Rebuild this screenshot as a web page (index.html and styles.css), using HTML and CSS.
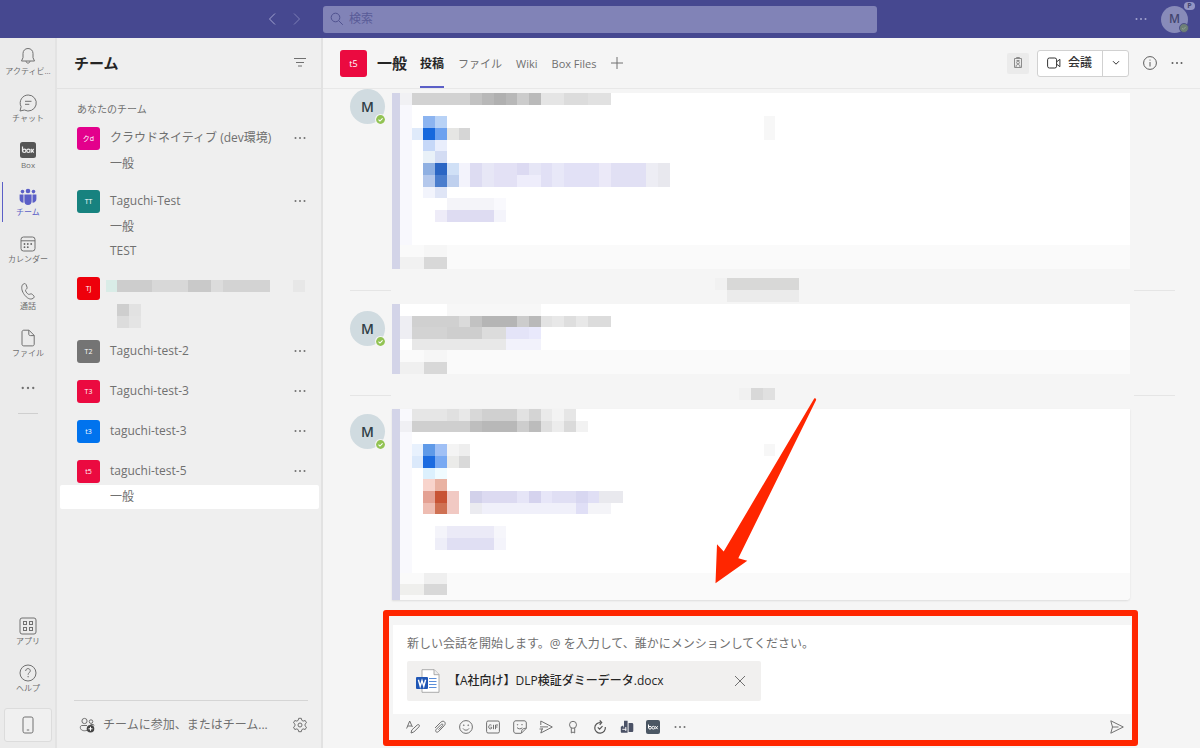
FILE: index.html
```html
<!DOCTYPE html>
<html lang="ja">
<head>
<meta charset="utf-8">
<title>チーム</title>
<link rel="stylesheet" href="styles.css">
</head>
<body>
<svg class="defs" aria-hidden="true">
  <symbol id="more" viewBox="0 0 12 12"><g fill="currentColor"><circle cx="1.5" cy="6" r="1"/><circle cx="6" cy="6" r="1"/><circle cx="10.5" cy="6" r="1"/></g></symbol>
  <symbol id="check" viewBox="0 0 10 10"><circle cx="5" cy="5" r="5" fill="#f5f5f5"/><circle cx="5" cy="5" r="4" fill="#92c353"/><path d="M3.2 5.1l1.3 1.3 2.4-2.5" fill="none" stroke="#fff" stroke-width="1"/></symbol>
</svg>
<div class="app">
  <header class="topbar">
    <div class="history">
      <button aria-label="戻る"><svg width="8" height="14" viewBox="0 0 8 14"><path d="M7 1.500L1.500 7L7 12.500"/></svg></button>
      <button class="dim" aria-label="進む"><svg width="8" height="14" viewBox="0 0 8 14"><path d="M1 1.500L6.500 7L1 12.500"/></svg></button>
    </div>
    <label class="search">
      <svg width="14" height="14" viewBox="0 0 14 14"><circle cx="5.500" cy="5.500" r="4.300"/><path d="M8.800 8.800l4 4"/></svg>
      <input type="search" placeholder="検索" aria-label="検索">
    </label>
    <div class="account">
      <button aria-label="設定など"><svg width="12" height="12"><use href="#more"/></svg></button>
      <button class="me" aria-label="アカウント">M<span class="me-badge">P</span><svg class="me-status" width="10" height="10" viewBox="0 0 10 10"><circle cx="5" cy="5" r="4.500" fill="#6d7f76" stroke="#4d4f88"/><path d="M3 5.200l1.300 1.200 2.500-2.600" fill="none" stroke="#91a196"/></svg></button>
    </div>
  </header>

  <nav class="rail">
    <a href="#"><svg width="18" height="18" viewBox="0 0 18 18"><path d="M9 1.500c-3 0-5 2.200-5 5v4.200L2.500 14h13L14 10.700V6.500c0-2.800-2-5-5-5zM7 14.200c.2 1.200 1 1.900 2 1.900s1.800-.7 2-1.900"/></svg><span>アクティビ...</span></a>
    <a href="#"><svg width="18" height="18" viewBox="0 0 18 18"><path d="M9.200 1a8 8 0 1 1-3.800 15L1 17l1.100-4.300A8 8 0 0 1 9.200 1zM6 7.300h6.500M6 10.300h4.300"/></svg><span>チャット</span></a>
    <a href="#"><svg width="18" height="18" viewBox="0 0 18 18"><rect x="1" y="1" width="16" height="16" rx="2.500" fill="#555" stroke="none"/><g stroke="#eee" stroke-width="1.200"><path d="M3.500 5.500v5"/><circle cx="5.300" cy="9.800" r="1.700"/><circle cx="9.400" cy="9.800" r="1.700"/><path d="M11.800 8l2.900 3.600M14.700 8l-2.900 3.600"/></g></svg><span>Box</span></a>
    <a href="#" class="on"><svg width="18" height="18" viewBox="0 0 18 18"><g fill="#5b5fc7" stroke="none"><circle cx="9" cy="3" r="2.300"/><circle cx="3.500" cy="3.600" r="1.800"/><circle cx="14.500" cy="3.600" r="1.800"/><path d="M5.400 6.500h7.200v6.800a3.600 3.600 0 0 1-7.200 0zM.6 6.500h3.900v8.200C2 14.700.6 13 .6 11zM17.400 6.500h-3.900v8.200c2.500 0 3.900-1.700 3.900-3.700z"/></g></svg><span>チーム</span></a>
    <a href="#"><svg width="18" height="18" viewBox="0 0 18 18"><rect x="2" y="2" width="14" height="14" rx="2.500"/><path d="M2 5.800h14"/><g fill="#666" stroke="none"><circle cx="8.800" cy="9" r=".9"/><circle cx="12.200" cy="9" r=".9"/><circle cx="5.500" cy="12.200" r=".9"/><circle cx="8.800" cy="12.200" r=".9"/><circle cx="5.500" cy="9" r=".9"/></g></svg><span>カレンダー</span></a>
    <a href="#"><svg width="18" height="18" viewBox="0 0 18 18"><path d="M3.300 3.200C4.500 1.300 6.300 1 7 2.500l1 2.600c.3 1-.1 1.700-1.300 2.700-.5.500.2 2 1.100 3.100 1 1.200 1.900 1.700 2.600 1.400 1.200-.5 2.200-.7 3 .1l1.400 1.500c.8.900.3 1.800-.8 2.500-3 1.800-6.300-.6-8.600-3.700C3 9.600 2 5.700 3.300 3.200z"/></svg><span>通話</span></a>
    <a href="#"><svg width="18" height="18" viewBox="0 0 18 18"><path d="M3 3c0-1.100.7-1.800 1.800-1.800H10l5.200 5.200v8.800c0 1.100-.7 1.700-1.800 1.700H4.800C3.700 16.900 3 16.300 3 15.200zM9.800 1.300v3.800c0 1 .5 1.500 1.500 1.500h3.800"/></svg><span>ファイル</span></a>
    <button class="rail-more" aria-label="その他"><svg width="14" height="14"><use href="#more"/></svg></button>
    <hr>
    <div class="rail-end">
      <a href="#"><svg width="18" height="18" viewBox="0 0 18 18"><rect x="1" y="1" width="16" height="16" rx="2"/><rect x="4.500" y="4.500" width="3" height="3"/><rect x="10.500" y="4.500" width="3" height="3"/><rect x="4.500" y="10.500" width="3" height="3"/><rect x="10.500" y="10.500" width="3" height="3"/></svg><span>アプリ</span></a>
      <a href="#"><svg width="18" height="18" viewBox="0 0 18 18"><circle cx="9" cy="9" r="8"/><path d="M6.700 7c0-1.500 1-2.400 2.300-2.400s2.300.9 2.300 2.200c0 1.700-2.200 2-2.200 3.900"/><circle cx="9.100" cy="12.800" r=".3"/></svg><span>ヘルプ</span></a>
      <button class="mobile" aria-label="モバイルアプリ"><svg width="18" height="18" viewBox="0 0 18 18"><rect x="4" y="1" width="10" height="16" rx="1.800"/><path d="M7.800 14h2.400"/></svg></button>
    </div>
  </nav>

  <aside class="teams">
    <header class="teams-head"><h1>チーム</h1><button aria-label="フィルター"><svg width="12" height="12" viewBox="0 0 12 12"><path d="M0 1.500h12M2 5.500h8M4 9h4"/></svg></button></header>
    <h2>あなたのチーム</h2>
    <ul class="team-list">
      <li class="has-channels"><div class="team"><span class="tile magenta">クd</span><a href="#">クラウドネイティブ (dev環境)</a><button aria-label="その他"><svg width="12" height="12"><use href="#more"/></svg></button></div>
        <ul><li><a href="#">一般</a></li></ul></li>
      <li class="has-channels"><div class="team"><span class="tile teal">TT</span><a href="#">Taguchi-Test</a><button aria-label="その他"><svg width="12" height="12"><use href="#more"/></svg></button></div>
        <ul><li><a href="#">一般</a></li><li><a href="#">TEST</a></li></ul></li>
      <li class="has-channels"><div class="team"><span class="tile red">TJ</span>
        <svg class="name-mosaic" width="188" height="48" viewBox="0 0 16 4" preserveAspectRatio="none" shape-rendering="crispEdges"><rect x="-.9" y="0" width=".9" height="1" fill="#d9ece7"/><rect width="4" height="1" fill="#cdcdcd"/><rect x="3" width="3" height="1" fill="#d8d8d8"/><rect x="6" width="2" height="1" fill="#c9c9c9"/><rect x="8" width="1" height="1" fill="#dcdcdc"/><rect x="9" width="4" height="1" fill="#d3d3d3"/><rect x="15" width="1" height="1" fill="#e7e7e7"/><rect y="2" width="1" height="1" fill="#cecece"/><rect x="1" y="2" width="1" height="1" fill="#e2e2e2"/><rect y="3" width="1" height="1" fill="#dcdcdc"/><rect x="1" y="3" width="1" height="1" fill="#e4e4e4"/></svg></div>
        <ul><li></li></ul></li>
      <li><div class="team"><span class="tile gray">T2</span><a href="#">Taguchi-test-2</a><button aria-label="その他"><svg width="12" height="12"><use href="#more"/></svg></button></div></li>
      <li><div class="team"><span class="tile crimson">T3</span><a href="#">Taguchi-test-3</a><button aria-label="その他"><svg width="12" height="12"><use href="#more"/></svg></button></div></li>
      <li><div class="team"><span class="tile blue">t3</span><a href="#">taguchi-test-3</a><button aria-label="その他"><svg width="12" height="12"><use href="#more"/></svg></button></div></li>
      <li class="has-channels"><div class="team"><span class="tile crimson">t5</span><a href="#">taguchi-test-5</a><button aria-label="その他"><svg width="12" height="12"><use href="#more"/></svg></button></div>
        <ul><li class="selected"><a href="#">一般</a></li></ul></li>
    </ul>
    <footer class="teams-foot">
      <button class="join"><svg width="16" height="16" viewBox="0 0 16 16"><circle cx="5.500" cy="4" r="2.600"/><circle cx="12" cy="4.600" r="1.800"/><path d="M8 13.300c-3.500 1.200-6.700-.2-6.700-2.800 0-1.200.5-2 1.700-2h5M11.500 7.500H14c.7 0 1 .4 1 1.100"/><circle cx="11.500" cy="11.800" r="3.800" fill="#444" stroke="none"/><path d="M11.500 9.800v4M9.500 11.800h4" stroke="#fff"/></svg><span>チームに参加、またはチーム...</span></button>
      <button aria-label="チームを管理"><svg width="16" height="16" viewBox="0 0 16 16"><circle cx="8" cy="8" r="2"/><path d="M6.700 1.300h2.600l.5 2 1.300.8 2.100-.6 1.300 2.300L13 7.200v1.600l1.500 1.400-1.300 2.300-2.100-.6-1.300.8-.5 2H6.700l-.5-2-1.300-.8-2.100.6-1.300-2.300L3 8.800V7.200L1.500 5.800l1.300-2.300 2.100.6 1.300-.8z"/></svg></button>
    </footer>
  </aside>

  <main class="channel">
    <header class="channel-head">
      <span class="tile crimson large">t5</span>
      <h2>一般</h2>
      <nav class="tabs"><a href="#" class="on">投稿</a><a href="#">ファイル</a><a href="#">Wiki</a><a href="#">Box Files</a></nav>
      <button aria-label="タブを追加"><svg width="12" height="12" viewBox="0 0 12 12"><path d="M6 0v12M0 6h12"/></svg></button>
      <div class="actions">
        <button class="badge-btn" aria-label="組織"><svg width="10" height="12" viewBox="0 0 10 12"><path d="M1.500 1.500h7v9h-7zM3.500 1.500V.5h3v1M3 10c0-2 .8-2.500 2-2.500S7 8 7 10M3.500 3.500h3"/><circle cx="5" cy="5.500" r="1.400"/></svg></button>
        <div class="meet"><button><svg width="14" height="12" viewBox="0 0 14 12"><rect x=".6" y="1" width="9" height="10" rx="1.800"/><path d="M9.700 4.800l3.200-2.500v7.400L9.700 7.200"/></svg>会議</button><button class="meet-menu" aria-label="会議のオプション"><svg width="8" height="6" viewBox="0 0 8 6"><path d="M1 1.200l3 3 3-3"/></svg></button></div>
        <button aria-label="情報"><svg width="14" height="14" viewBox="0 0 14 14"><circle cx="7" cy="7" r="6.400"/><path d="M7 6v4.500M7 3.600v1"/></svg></button>
        <button aria-label="その他"><svg width="12" height="12"><use href="#more"/></svg></button>
      </div>
    </header>

    <section class="feed">
      <article class="post first">
        <div class="avatar">M<svg width="11" height="11"><use href="#check"/></svg></div>
        <div class="card">
          <svg class="mosaic" width="387" height="152" viewBox="0 0 33 13" preserveAspectRatio="none" shape-rendering="crispEdges">
            <rect width="1" height="13" fill="#f8f8fd"/><rect width="1" height="1" fill="#f1f1f4"/>
            <rect x="1" width="5" height="1" fill="#d2d2d2"/><rect x="6" width="1" height="1" fill="#c2c2c2"/><rect x="7" width="3" height="1" fill="#b8b8b8"/><rect x="8" width="1" height="1" fill="#b0b0b0"/><rect x="10" width="1" height="1" fill="#ccc"/><rect x="11" width="1" height="1" fill="#bababa"/><rect x="12" width="2" height="1" fill="#e5e5e5"/><rect x="14" width="2" height="1" fill="#dcdcdc"/><rect x="16" width="2" height="1" fill="#e1e1e1"/>
            <rect x="2" y="2" width="1" height="1" fill="#8cb4f0"/><rect x="3" y="2" width="1" height="1" fill="#b8d2f6"/>
            <rect x="1" y="3" width="1" height="1" fill="#dfeafa"/><rect x="2" y="3" width="1" height="1" fill="#1668dd"/><rect x="3" y="3" width="1" height="1" fill="#6ca1ef"/><rect x="4" y="3" width="1" height="1" fill="#e6e6e4"/><rect x="5" y="3" width="1" height="1" fill="#d6d6d6"/>
            <rect x="2" y="4" width="1" height="1" fill="#c6d8f8"/><rect x="3" y="4" width="1" height="1" fill="#e9eefc"/>
            <rect x="2" y="5" width="1" height="1" fill="#e9f1f8"/><rect x="3" y="5" width="1" height="1" fill="#d3dcf3"/>
            <rect x="2" y="6" width="1" height="1" fill="#8fb0e2"/><rect x="3" y="6" width="1" height="1" fill="#2b66c4"/><rect x="4" y="6" width="1" height="1" fill="#d0e0f6"/><rect x="5" y="6" width="1" height="2" fill="#f3f3fc"/><rect x="6" y="6" width="1" height="2" fill="#dddcf2"/><rect x="7" y="6" width="1" height="2" fill="#e7e7f6"/><rect x="8" y="6" width="2" height="2" fill="#e3e1f5"/><rect x="10" y="6" width="1" height="1" fill="#dcdaf2"/><rect x="11" y="6" width="1" height="1" fill="#e6e6f6"/><rect x="10" y="7" width="2" height="1" fill="#eeedfb"/><rect x="12" y="6" width="1" height="2" fill="#e1e0f5"/><rect x="13" y="6" width="1" height="2" fill="#e8e8f8"/><rect x="14" y="6" width="3" height="2" fill="#e2e1f6"/><rect x="17" y="6" width="1" height="2" fill="#ebe9f8"/><rect x="18" y="6" width="3" height="2" fill="#e1e0f4"/><rect x="21" y="6" width="1" height="2" fill="#ededf4"/><rect x="22" y="6" width="1" height="2" fill="#e8e8ee"/>
            <rect x="2" y="7" width="1" height="1" fill="#b4c8ec"/><rect x="3" y="7" width="1" height="1" fill="#4a7dcd"/><rect x="4" y="7" width="1" height="1" fill="#bfd0ee"/>
            <rect x="2" y="8" width="1" height="1" fill="#f2f4fc"/><rect x="3" y="8" width="1" height="1" fill="#dfe5f6"/>
            <rect x="4" y="9" width="4" height="1" fill="#f4f4f9"/><rect x="8" y="9" width="1" height="1" fill="#f9f9fd"/>
            <rect x="3" y="10" width="1" height="1" fill="#eeecf8"/><rect x="4" y="10" width="4" height="1" fill="#dedcf2"/><rect x="8" y="10" width="1" height="1" fill="#f4f4fb"/>
            <rect x="31" y="2" width="1" height="2" fill="#f7f7f7"/>
          </svg>
          <div class="reply"><svg class="mosaic" width="47" height="24" viewBox="0 0 4 2" preserveAspectRatio="none" shape-rendering="crispEdges"><rect x="2" width="2" height="1" fill="#f6f6f6"/><rect y="1" width="2" height="1" fill="#f1f1f1"/><rect x="2" y="1" width="2" height="1" fill="#d8d8d8"/></svg></div>
        </div>
      </article>
      <div class="date"><svg width="96" height="24" viewBox="0 0 8 2" preserveAspectRatio="none" shape-rendering="crispEdges"><rect x="1" width="6" height="1" fill="#d8d8d7"/><rect x="1" y="1" width="6" height="1" fill="#ebebeb"/><rect x="0" width="1" height="1" fill="#f1f1f1"/></svg></div>
      <article class="post second">
        <div class="avatar">M<svg width="11" height="11"><use href="#check"/></svg></div>
        <div class="card">
          <svg class="mosaic" width="387" height="46" viewBox="0 0 33 4" preserveAspectRatio="none" shape-rendering="crispEdges">
            <rect x="4" width="8" height="1" fill="#f7f7f7"/><rect y="1" width="1" height="2" fill="#eeeef3"/>
            <rect x="1" y="1" width="4" height="1" fill="#d0d0d0"/><rect x="5" y="1" width="1" height="1" fill="#dadada"/><rect x="6" y="1" width="1" height="1" fill="#c2c2c2"/><rect x="7" y="1" width="3" height="1" fill="#b5b5b5"/><rect x="10" y="1" width="1" height="1" fill="#ccc"/><rect x="11" y="1" width="1" height="1" fill="#b9b9b9"/><rect x="12" y="1" width="1" height="1" fill="#e3e3e3"/><rect x="13" y="1" width="1" height="1" fill="#e8e8e8"/><rect x="14" y="1" width="1" height="1" fill="#dedede"/><rect x="15" y="1" width="1" height="1" fill="#e8e8e8"/><rect x="16" y="1" width="2" height="1" fill="#dcdcdc"/>
            <rect x="1" y="2" width="3" height="1" fill="#d3d3d3"/><rect x="4" y="2" width="3" height="1" fill="#cecece"/><rect x="7" y="2" width="2" height="1" fill="#dcdcdc"/><rect x="9" y="2" width="2" height="1" fill="#e4e4f8"/><rect x="11" y="2" width="1" height="1" fill="#e9e9fc"/>
            <rect x="1" y="3" width="8" height="1" fill="#e8e8e8"/><rect x="9" y="3" width="3" height="1" fill="#f2f2fb"/>
          </svg>
          <div class="reply"><svg class="mosaic" width="47" height="24" viewBox="0 0 4 2" preserveAspectRatio="none" shape-rendering="crispEdges"><rect x="2" width="2" height="1" fill="#f6f6f6"/><rect y="1" width="2" height="1" fill="#f0f0f0"/><rect x="2" y="1" width="2" height="1" fill="#d8d8d8"/></svg></div>
        </div>
      </article>
      <div class="date"><svg width="96" height="24" viewBox="0 0 8 2" preserveAspectRatio="none" shape-rendering="crispEdges"><rect x="3" y=".4" width="1" height="1" fill="#d8d8d8"/><rect x="4" y=".4" width="1" height="1" fill="#e0e0e0"/><rect x="2" y=".4" width="1" height="1" fill="#f1f1f1"/></svg></div>
      <article class="post">
        <div class="avatar">M<svg width="11" height="11"><use href="#check"/></svg></div>
        <div class="card last">
          <svg class="mosaic" width="387" height="164" viewBox="0 0 33 14" preserveAspectRatio="none" shape-rendering="crispEdges">
            <rect width="1" height="14" fill="#f9f9fd"/>
            <rect x="1" width="3" height="1" fill="#e6e6e6"/><rect x="4" width="1" height="1" fill="#e0e0e0"/><rect x="5" width="1" height="1" fill="#e8e8e8"/><rect x="6" width="1" height="1" fill="#d8d8d8"/><rect x="7" width="3" height="1" fill="#d0d0d0"/><rect x="10" width="1" height="1" fill="#e2e2e2"/><rect x="11" width="1" height="1" fill="#d4d4d4"/><rect x="12" width="1" height="1" fill="#eaeaea"/><rect x="13" width="1" height="1" fill="#f3f3f3"/><rect x="14" width="1" height="1" fill="#e6e6e6"/>
            <rect y="1" width="1" height="1" fill="#f0f0f4"/><rect x="1" y="1" width="5" height="1" fill="#cfcfcf"/><rect x="6" y="1" width="1" height="1" fill="#bebebe"/><rect x="7" y="1" width="3" height="1" fill="#b8b8b8"/><rect x="10" y="1" width="1" height="1" fill="#cdcdcd"/><rect x="11" y="1" width="1" height="1" fill="#bcbcbc"/><rect x="12" y="1" width="1" height="1" fill="#dfdfdf"/><rect x="13" y="1" width="1" height="1" fill="#ececec"/><rect x="14" y="1" width="1" height="1" fill="#dadada"/><rect x="15" y="1" width="1" height="1" fill="#f2f2f2"/>
            <rect x="1" y="3" width="1" height="1" fill="#e8f1fd"/><rect x="2" y="3" width="1" height="1" fill="#5f9ae8"/><rect x="3" y="3" width="1" height="1" fill="#a0c0f5"/><rect x="4" y="3" width="1" height="1" fill="#f4f4f4"/><rect x="5" y="3" width="1" height="1" fill="#eee"/>
            <rect x="1" y="4" width="1" height="1" fill="#dbe9fb"/><rect x="2" y="4" width="1" height="1" fill="#1b6be0"/><rect x="3" y="4" width="1" height="1" fill="#78a9f2"/><rect x="4" y="4" width="1" height="1" fill="#ebebe9"/><rect x="5" y="4" width="1" height="1" fill="#d9d9d9"/>
            <rect x="2" y="5" width="1" height="1" fill="#dcf0fd"/><rect x="3" y="5" width="1" height="1" fill="#f0fbff"/>
            <rect x="2" y="6" width="1" height="1" fill="#f8d4cc"/><rect x="3" y="6" width="1" height="1" fill="#e9b2a2"/>
            <rect x="2" y="7" width="1" height="1" fill="#e4a193"/><rect x="3" y="7" width="1" height="1" fill="#c85334"/><rect x="4" y="7" width="1" height="2" fill="#f1c9c3"/>
            <rect x="6" y="7" width="1" height="1" fill="#d2d1ea"/><rect x="7" y="7" width="3" height="1" fill="#dcdaf1"/><rect x="10" y="7" width="1" height="1" fill="#e6e5f7"/><rect x="11" y="7" width="1" height="1" fill="#d5d3ee"/><rect x="12" y="7" width="1" height="1" fill="#e7e6f8"/><rect x="13" y="7" width="2" height="1" fill="#e0dff4"/><rect x="15" y="7" width="1" height="1" fill="#d8d7f1"/><rect x="16" y="7" width="1" height="1" fill="#e0dff5"/><rect x="17" y="7" width="2" height="1" fill="#e9e9ee"/>
            <rect x="2" y="8" width="1" height="1" fill="#eebdb2"/><rect x="3" y="8" width="1" height="1" fill="#cf7153"/><rect x="6" y="8" width="1" height="1" fill="#ebebf0"/><rect x="7" y="8" width="8" height="1" fill="#f0f0fa"/><rect x="15" y="8" width="1" height="1" fill="#e0dff6"/><rect x="16" y="8" width="2" height="1" fill="#f4f4f8"/>
            <rect x="3" y="10" width="1" height="1" fill="#f4f4fa"/><rect x="4" y="10" width="4" height="1" fill="#ebeaf7"/><rect x="8" y="10" width="1" height="1" fill="#f6f6fb"/>
            <rect x="3" y="11" width="1" height="1" fill="#eeeef8"/><rect x="4" y="11" width="4" height="1" fill="#e0dff3"/><rect x="8" y="11" width="1" height="1" fill="#f4f4fb"/>
            <rect x="31" y="3" width="1" height="1" fill="#f7f7f7"/>
          </svg>
          <div class="reply"><svg class="mosaic" width="47" height="22" viewBox="0 0 4 2" preserveAspectRatio="none" shape-rendering="crispEdges"><rect x="2" width="2" height="1" fill="#efefef"/><rect y="1" width="2" height="1" fill="#efefed"/><rect x="2" y="1" width="2" height="1" fill="#d8d8d8"/></svg></div>
        </div>
      </article>
    </section>

    <section class="compose">
      <div class="draft">
        <input type="text" aria-label="新しい会話" placeholder="新しい会話を開始します。@ を入力して、誰かにメンションしてください。">
        <div class="file">
          <svg width="24" height="24" viewBox="0 0 24 24"><path d="M6 .7h12.200L23 5.500v17.800H6z" fill="#fff" stroke="#999" stroke-width=".8"/><path d="M18 .7v5h5" fill="#eee" stroke="#999" stroke-width=".8"/><path d="M13 9.500h7.500M13 12.500h7.500M13 15.500h7.500M13 18.500h7.500" stroke="#5b8ed8"/><rect y="8" width="12" height="12" rx="1" fill="#1f56b5" stroke="none"/><path d="M2.400 10.800l1.800 6.400L6 11.500l1.800 5.700 1.800-6.400" fill="none" stroke="#fff" stroke-width="1.400"/></svg>
          <span>【A社向け】DLP検証ダミーデータ.docx</span>
          <button aria-label="添付ファイルを削除"><svg width="12" height="12" viewBox="0 0 12 12"><path d="M1 1l10 10M11 1L1 11"/></svg></button>
        </div>
      </div>
      <div class="tools">
        <div class="tool-set">
          <button aria-label="書式"><svg width="14" height="14" viewBox="0 0 14 14"><path d="M.6 8.500L3.700 1l2.700 6M1.700 6h4M5 13l.8-3 5.400-5c1.500-1.200 3 .4 1.800 1.800L7.800 12z"/></svg></button>
          <button aria-label="添付"><svg width="14" height="14" viewBox="0 0 14 14"><path d="M2 8l5.800-5.800c2.800-2.600 6 .5 3.500 3.400L5.600 11.500c-2 1.800-4-.2-2.300-2.200l5-5c1-1 2.200.3 1.300 1.300L5.500 9.700"/></svg></button>
          <button aria-label="絵文字"><svg width="14" height="14" viewBox="0 0 14 14"><circle cx="7" cy="7" r="6.400"/><path d="M4 8.500c1.400 2.200 4.600 2.200 6 0"/><circle cx="4.800" cy="5.200" r=".4"/><circle cx="9.200" cy="5.200" r=".4"/></svg></button>
          <button aria-label="GIF"><svg width="14" height="14" viewBox="0 0 14 14"><rect x=".6" y="1" width="12.800" height="12" rx="1.500"/><path d="M5.500 5.200c-1-.8-2.800-.4-2.800 1.700s2 2.500 2.900 1.500V7.200H4.500M7.500 4.800v4.400M9.500 9.200V5H12M9.500 7h2"/></svg></button>
          <button aria-label="ステッカー"><svg width="14" height="14" viewBox="0 0 14 14"><path d="M3 .8h8c1.500 0 2.300.8 2.300 2.200V8.300l-5 5H3C1.500 13.300.7 12.500.7 11V3C.7 1.600 1.500.8 3 .8zM8.500 13c0-3.500.8-4.500 4.700-4.800M4 7.500c1 1.600 4 1.900 5.300.2"/><circle cx="4.600" cy="4.800" r=".3"/><circle cx="9" cy="4.800" r=".3"/></svg></button>
          <button aria-label="ストリーム"><svg width="14" height="14" viewBox="0 0 14 14"><path d="M1.800 5V1L13.300 7 1.800 13l1.500-4.500M1 6.900h8M.5 9h3.500"/></svg></button>
          <button aria-label="称賛"><svg width="14" height="14" viewBox="0 0 14 14"><circle cx="7" cy="4.800" r="3.500"/><path d="M5.300 8V13L7 12l1.700 1V8"/></svg></button>
          <button aria-label="更新"><svg width="14" height="14" viewBox="0 0 14 14"><path d="M12.300 7A5.300 5.300 0 1 1 7.500 2.600M6.700.5l2 2.100-2 2.200M4.800 7.300l1.800 1.800 2.900-3" stroke="#555" stroke-width="1.200"/></svg></button>
          <button aria-label="アプリ"><svg width="14" height="14" viewBox="0 0 14 14"><path d="M4 .8h3.600v12H2C.8 12.800.8 12 .8 11V6.800L3 5.500l1 2.500zM8.600 3h3.200c1 0 1.500.6 1.500 1.500v6c0 1-.5 1.500-1.500 1.500H8.600z" fill="#4b5266" stroke="none"/><path d="M2.300 9.300h4M5.800 7v4" stroke="#f5f5f5"/></svg></button>
          <button aria-label="Box"><svg width="14" height="14" viewBox="0 0 14 14"><rect width="14" height="14" rx="2" fill="#4b5764" stroke="none"/><g stroke="#fff"><path d="M2.500 4.500V8"/><circle cx="4" cy="7.700" r="1.400"/><circle cx="7.300" cy="7.700" r="1.400"/><path d="M9.300 6.200l2.400 3M11.700 6.200l-2.400 3"/></g></svg></button>
          <button aria-label="その他"><svg width="12" height="12"><use href="#more"/></svg></button>
        </div>
        <button aria-label="送信"><svg width="14" height="14" viewBox="0 0 14 14"><path d="M.8.8L13.300 7 .8 13.200 2.500 7zM2.500 7h6"/></svg></button>
      </div>
      <div class="highlight"></div>
      <svg class="arrow" viewBox="0 0 102 186" aria-hidden="true"><path d="M99.200.5c1-.8 2.400.6 1.800 1.700L23.300 160.200l9 2.600L.5 185.300 2 146.200l6.700 7.300z" fill="#ff2600"/></svg>
    </section>
  </main>
</div>
</body>
</html>
```
FILE: styles.css
```css
* { box-sizing: border-box; }
body {
  margin: 0;
  font: 12px/16px "Open Sans", "Noto Sans CJK JP", sans-serif;
  color: #707070;
  background: #f5f5f5;
}
h1, h2, ul { margin: 0; padding: 0; list-style: none; }
a { color: inherit; text-decoration: none; }
button {
  display: flex;
  align-items: center;
  justify-content: center;
  padding: 0;
  border: 0;
  background: none;
  color: inherit;
  font: inherit;
}
svg { display: block; flex: none; fill: none; stroke: currentColor; stroke-width: 1; }
symbol, .mosaic, .date svg, .name-mosaic, .arrow { stroke: none; }
.defs { display: none; }
.app {
  display: grid;
  grid-template: 38px 1fr / 57px 266px 1fr;
  height: 100vh;
}

.topbar {
  grid-column: 1 / -1;
  display: grid;
  grid-template-columns: 323px minmax(200px, 554px) 1fr;
  align-items: center;
  background: #464890;
  color: #a3a4d0;
}
.history { display: flex; justify-content: flex-end; gap: 17px; padding-right: 22px; }
.history .dim { opacity: .6; }
.search {
  display: flex;
  align-items: center;
  gap: 5px;
  height: 27px;
  padding: 0 7px;
  border-radius: 3px;
  background: #8183b7;
  color: #50528f;
}
.search input { flex: 1; min-width: 0; padding: 0; border: 0; outline: 0; background: none; font: inherit; }
.search input::placeholder { color: #595b98; opacity: 1; }
.account { display: flex; align-items: center; justify-content: flex-end; gap: 14px; padding-right: 12px; }
.me {
  position: relative;
  width: 27px;
  height: 27px;
  border-radius: 50%;
  background: #888bb9;
  color: #43466f;
  font-weight: 600;
}
.me-badge {
  position: absolute;
  top: -4px;
  right: -7px;
  width: 11px;
  border-radius: 4px;
  background: #9496c4;
  font-size: 7px;
  font-weight: 700;
  line-height: 8px;
}
.me-status { position: absolute; right: -1px; bottom: 0; }

.rail {
  display: flex;
  flex-direction: column;
  border-right: 2px solid #e3e3e3;
  background: #ebebeb;
  font-size: 8px;
  line-height: 10px;
}
.rail a {
  display: flex;
  flex-direction: column;
  align-items: center;
  gap: 1px;
  height: 47px;
  padding: 9px 0 0 1px;
  white-space: nowrap;
}
.rail .on {
  color: #5b5fc7;
  background: linear-gradient(#5b5fc7, #5b5fc7) 2px 3px / 1px 40px no-repeat;
}
.rail-more { height: 42px; }
.rail hr { width: 20px; margin: 4px auto 0; border: 0; border-top: 1px solid #cfcfcf; }
.rail-end { margin-top: auto; padding-bottom: 6px; }
.mobile {
  width: 48px;
  height: 34px;
  margin: 6px 4px 0;
  border: 1px solid #dcdcdc;
  border-radius: 3px;
  background: #f0f0f0;
}

.teams {
  display: flex;
  flex-direction: column;
  min-height: 0;
  border-right: 2px solid #e2e2e2;
  background: #efefef;
}
.teams-head {
  display: flex;
  align-items: center;
  justify-content: space-between;
  height: 51px;
  padding: 0 15px 0 17px;
  border-bottom: 1px solid #e2e2e2;
}
h1 { color: #252525; font-size: 15px; font-weight: 700; }
.teams > h2 { margin: 12px 0 7px 20px; font-size: 10px; font-weight: 400; }
.team-list { flex: 1; padding-left: 3px; padding-right: 2px; }
.team-list > li { padding-bottom: 12px; }
.team-list > .has-channels { padding-bottom: 11px; }
.team { display: flex; align-items: center; height: 28px; padding: 0 13px 0 17px; }
.team a { flex: 1; margin-left: 10px; white-space: nowrap; }
.team-list ul li { height: 24px; padding-left: 50px; line-height: 24px; border-radius: 2px; }
.team-list ul .selected { background: #fff; }
.tile {
  flex: none;
  width: 23px;
  height: 23px;
  border-radius: 3px;
  color: #fff;
  font-size: 7px;
  line-height: 23px;
  text-align: center;
}
.large { width: 27px; height: 27px; font-size: 9px; line-height: 27px; }
.magenta { background: #e3008c; }
.teal { background: #17827f; }
.red { background: #ee000b; }
.gray { background: #747474; }
.crimson { background: #eb0a40; }
.blue { background: #0073ee; }
.name-mosaic { align-self: flex-start; margin: 6px 0 0 17px; overflow: visible; }
.teams-foot {
  display: flex;
  align-items: center;
  justify-content: space-between;
  gap: 8px;
  height: 48px;
  margin: 0 13px 0 17px;
  border-top: 1px solid #d5d5d5;
}
.join { gap: 8px; padding-left: 5px; white-space: nowrap; }

.channel { display: flex; flex-direction: column; min-width: 0; min-height: 0; background: #f5f5f5; }
.channel-head {
  display: flex;
  align-items: center;
  height: 51px;
  padding: 0 17px;
  border-bottom: 1px solid #e8e8e8;
}
.channel-head h2 { margin: 0 13px 0 10px; color: #252525; font-size: 15px; font-weight: 700; white-space: nowrap; }
.tabs { display: flex; align-self: stretch; gap: 14px; margin-right: 14px; font-size: 11px; line-height: 52px; white-space: nowrap; }
.tabs .on { height: 50px; border-bottom: 2px solid #5b5fc7; color: #252525; font-size: 12px; font-weight: 700; }
.actions { display: flex; align-items: center; gap: 14px; margin-left: auto; color: #5c5c5c; }
.badge-btn { width: 22px; height: 21px; margin-right: -6px; border-radius: 2px; background: #ebebeb; color: #8c8c8c; }
.meet { display: flex; border: 1px solid #d1d1d1; border-radius: 3px; background: #fff; }
.meet button { gap: 7px; height: 25px; padding: 0 10px 0 9px; color: #333; font-weight: 500; white-space: nowrap; }
.meet .meet-menu { width: 26px; padding: 0; border-left: 1px solid #d1d1d1; }

.feed { flex: 1; min-height: 0; overflow: hidden; padding: 4px 25px 0 27px; }
.post { display: flex; gap: 7px; margin-right: 45px; }
.avatar {
  position: relative;
  flex: none;
  width: 35px;
  height: 35px;
  margin-top: 5px;
  border-radius: 50%;
  background: #d0dbe0;
  color: #2f3e46;
  font-size: 14px;
  font-weight: 600;
  line-height: 35px;
  text-align: center;
}
.first .avatar { margin-top: -4px; }
.second .avatar { margin-top: 7px; }
.avatar svg { position: absolute; right: -1px; bottom: -1px; }
.card { flex: 1; min-width: 0; border-left: 8px solid #d3d4e8; background: #fff; }
.reply { height: 24px; background: #fafafa; }
.last { border-radius: 0 0 4px 0; box-shadow: 0 1px 2px #dcdcdc; }
.last .reply { height: 27px; border-radius: 0 0 4px 0; }
.date { display: flex; align-items: center; justify-content: space-between; height: 35px; padding-top: 7px; }
.date::before, .date::after { content: ""; width: 41px; border-top: 1px solid #e5e5e5; }

.compose { position: relative; margin: 0 69px 8px 70px; }
.draft { padding: 8px 14px 13px; background: #fff; }
.draft input {
  display: block;
  width: 100%;
  height: 20px;
  margin-bottom: 8px;
  padding: 0;
  border: 0;
  outline: 0;
  background: none;
  font: inherit;
}
.draft input::placeholder { color: #707070; opacity: 1; }
.file {
  display: flex;
  align-items: center;
  gap: 8px;
  max-width: 354px;
  height: 40px;
  padding: 0 15px 0 9px;
  border-radius: 2px;
  background: #f1f0ef;
}
.file span { flex: 1; color: #252525; font-weight: 500; white-space: nowrap; }
.tools { display: flex; align-items: center; justify-content: space-between; height: 26px; padding: 0 7px 0 13px; }
.tool-set { display: flex; justify-content: space-between; width: 281px; }
.tools button { width: 14px; }
.highlight { position: absolute; inset: -15px -7px -6px -10px; border: 6px solid #ff2600; border-radius: 3px; }
.arrow { position: absolute; top: -227px; left: 322px; width: 102px; height: 186px; }
```
